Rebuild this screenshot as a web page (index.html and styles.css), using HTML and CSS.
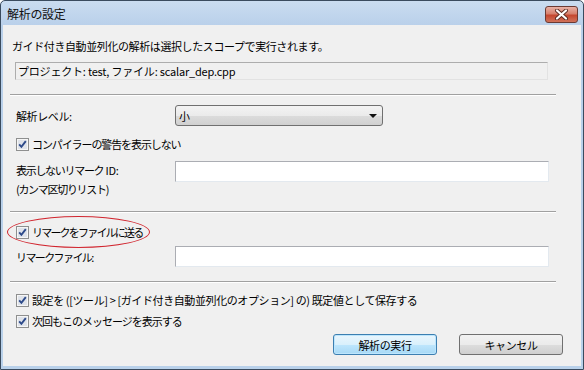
FILE: index.html
```html
<!DOCTYPE html>
<html lang="ja">
<head>
    <meta charset="UTF-8">
    <title>解析の設定</title>
    <link rel="stylesheet" href="styles.css">
</head>
<body>
    <div class="window">
        <div class="titlebar">
            <span class="title">解析の設定</span>
            <div class="close">
                <svg width="15" height="11" viewBox="0 0 15 11">
                    <path d="M3 1.5 L12 9.5 M12 1.5 L3 9.5" stroke="#5a2a22" stroke-width="4" stroke-linecap="round"/>
                    <path d="M3 1.5 L12 9.5 M12 1.5 L3 9.5" stroke="#fff" stroke-width="2.2" stroke-linecap="round"/>
                </svg>
            </div>
        </div>
        <div class="client">
            <p class="intro">ガイド付き自動並列化の解析は選択したスコープで実行されます。</p>
            <div class="scope">プロジェクト: test, ファイル: scalar_dep.cpp</div>
            <div class="sep sep-1"></div>

            <div class="row level-row">
                <span class="label">解析レベル:</span>
                <div class="combo">
                    <span>小</span>
                    <span class="arrow"></span>
                </div>
            </div>

            <div class="check check-warn">
                <svg class="box" width="13" height="13" viewBox="0 0 13 13"><rect x="0.5" y="0.5" width="12" height="12" fill="#f6f6f6" stroke="#8e8f8f"/><rect x="2" y="2" width="9" height="9" fill="#dfe3ea"/><path d="M3.2 6.4 L5.4 8.8 L9.8 3.2" stroke="#2d4a8a" stroke-width="1.9" fill="none"/></svg>
                <span>コンパイラーの警告を表示しない</span>
            </div>

            <div class="row id-row">
                <span class="label two-line"><span class="kana">表示しないリマーク</span> ID:<br><span class="kana">(カンマ区切りリスト)</span></span>
                <div class="textbox"></div>
            </div>

            <div class="sep sep-2"></div>

            <div class="check check-send">
                <span class="ring"></span>
                <svg class="box" width="13" height="13" viewBox="0 0 13 13"><rect x="0.5" y="0.5" width="12" height="12" fill="#f6f6f6" stroke="#8e8f8f"/><rect x="2" y="2" width="9" height="9" fill="#dfe3ea"/><path d="M3.2 6.4 L5.4 8.8 L9.8 3.2" stroke="#2d4a8a" stroke-width="1.9" fill="none"/></svg>
                <span>リマークをファイルに送る</span>
            </div>

            <div class="row file-row">
                <span class="label">リマークファイル:</span>
                <div class="textbox"></div>
            </div>

            <div class="sep sep-3"></div>

            <div class="check check-save">
                <svg class="box" width="13" height="13" viewBox="0 0 13 13"><rect x="0.5" y="0.5" width="12" height="12" fill="#f6f6f6" stroke="#8e8f8f"/><rect x="2" y="2" width="9" height="9" fill="#dfe3ea"/><path d="M3.2 6.4 L5.4 8.8 L9.8 3.2" stroke="#2d4a8a" stroke-width="1.9" fill="none"/></svg>
                <span>設定を ([ツール] &gt; [ガイド付き自動並列化のオプション] の) 既定値として保存する</span>
            </div>
            <div class="check check-next">
                <svg class="box" width="13" height="13" viewBox="0 0 13 13"><rect x="0.5" y="0.5" width="12" height="12" fill="#f6f6f6" stroke="#8e8f8f"/><rect x="2" y="2" width="9" height="9" fill="#dfe3ea"/><path d="M3.2 6.4 L5.4 8.8 L9.8 3.2" stroke="#2d4a8a" stroke-width="1.9" fill="none"/></svg>
                <span>次回もこのメッセージを表示する</span>
            </div>

            <div class="buttons">
                <div class="btn btn-default">解析の実行</div>
                <div class="btn">キャンセル</div>
            </div>
        </div>
    </div>
</body>
</html>
```

FILE: styles.css
```css
body {
    margin: 0;
    background: #fff;
    font-family: "Noto Sans CJK JP", sans-serif;
    font-size: 11px;
    letter-spacing: -0.4px;
    color: #000;
}
.window {
    width: 584px;
    height: 370px;
    box-sizing: border-box;
    border: 1px solid #3a4b5e;
    border-radius: 5px 5px 0 0;
    background: linear-gradient(to bottom, #cadcf0 0, #b9d0ea 25px, #b9d1ea 100%);
    display: flex;
    flex-direction: column;
}
.titlebar {
    height: 24px;
    display: flex;
    align-items: center;
    justify-content: space-between;
    padding: 0 5px 0 6px;
}
.title {
    font-size: 12px;
    letter-spacing: -0.3px;
    color: #111;
}
.close {
    width: 31px;
    height: 15px;
    border: 1px solid #6b3a33;
    border-radius: 3px;
    background: linear-gradient(to bottom, #e8b2a6 0, #d7806d 45%, #c5472f 55%, #d0725a 100%);
    display: flex;
    align-items: center;
    justify-content: center;
    margin-top: 2px;
}
.client {
    flex: 1;
    margin: 0 2px 3px;
    background: #f0f0f0;
    padding-top: 13px;
    display: flex;
    flex-direction: column;
    line-height: 16px;
}
.intro {
    margin: 0 0 0 9px;
    height: 16px;
}
.scope {
    margin: 8px 0 0 12px;
    width: 533px;
    height: 18px;
    box-sizing: border-box;
    border: 1px solid;
    border-color: #adadad #e2e2e2 #e2e2e2 #adadad;
    padding-left: 2px;
    line-height: 16px;
    letter-spacing: -0.2px;
}
.sep {
    margin-left: 7px;
    width: 546px;
    border-top: 1px solid #a0a0a0;
    border-bottom: 1px solid #fff;
    box-sizing: border-box;
    height: 2px;
}
.sep-1 { margin-top: 14px; }
.sep-2 { margin-top: 12px; }
.sep-3 { margin-top: 14px; }

.row {
    display: flex;
    align-items: center;
    margin-left: 13px;
}
.label {
    width: 159px;
    flex: none;
}
.level-row {
    margin-top: 9px;
}
.combo {
    width: 208px;
    height: 21px;
    box-sizing: border-box;
    border: 1px solid #707070;
    border-radius: 3px;
    background: linear-gradient(to bottom, #f3f3f3 0, #ebebeb 50%, #dcdcdc 51%, #d0d0d0 100%);
    display: flex;
    align-items: center;
    justify-content: space-between;
    padding: 0 4px 0 3px;
}
.arrow {
    width: 0;
    height: 0;
    border-left: 4px solid transparent;
    border-right: 4px solid transparent;
    border-top: 4px solid #111;
    margin-right: 1px;
}
.textbox {
    width: 374px;
    height: 21px;
    box-sizing: border-box;
    background: #fff;
    border: 1px solid;
    border-color: #abadb3 #e3e9ef #e3e9ef #abadb3;
}
.id-row {
    margin-top: 9px;
    align-items: flex-start;
}
.two-line {
    line-height: 19px;
    letter-spacing: -0.3px;
}
.two-line .kana {
    letter-spacing: -1.3px;
}
.file-row {
    margin-top: 6px;
}
.file-row .label {
    letter-spacing: -1.6px;
}

.check {
    position: relative;
    display: flex;
    align-items: center;
    gap: 3px;
    margin-left: 13px;
    height: 16px;
}
.box {
    flex: none;
}
.check-warn { margin-top: 10px; letter-spacing: -1.1px; }
.check-send { margin-top: 11px; letter-spacing: -1.8px; }
.check-save { margin-top: 9px; }
.check-next { margin-top: 5px; letter-spacing: -1px; }
.ring {
    position: absolute;
    left: -9px;
    top: -8px;
    width: 141px;
    height: 30px;
    border: 1px solid #d1262f;
    border-radius: 50%;
}

.buttons {
    display: flex;
    justify-content: flex-end;
    gap: 22px;
    margin-top: 5px;
    padding-right: 18px;
}
.btn {
    width: 104px;
    height: 21px;
    box-sizing: border-box;
    border: 1px solid #707070;
    border-radius: 3px;
    background: linear-gradient(to bottom, #f2f2f2 0, #ebebeb 50%, #dddddd 51%, #cfcfcf 100%);
    display: flex;
    align-items: center;
    justify-content: center;
}
.btn-default {
    border-color: #3c7fb1;
    box-shadow: inset 0 0 0 1px #bde6fd;
    background: linear-gradient(to bottom, #eaf6fd 0, #d9f0fc 50%, #bee6fd 51%, #a7d9f5 100%);
}
```
